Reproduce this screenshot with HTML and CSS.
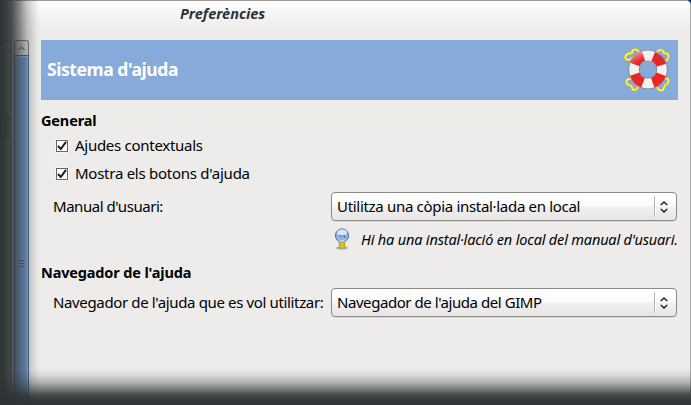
FILE: index.html
```html
<!DOCTYPE html>
<html lang="ca">
<head>
<meta charset="utf-8">
<title>Preferències</title>
<link rel="stylesheet" href="styles.css">
</head>
<body>
<div class="backdrop">
<div class="window">
  <header class="titlebar"><span class="title">Preferències</span></header>
  <div class="body">
    <aside class="tree-edge">
      <div class="tree"><div class="selected-row"></div></div>
      <div class="scrollbar">
        <div class="stepper"><svg width="9" height="6" viewBox="0 0 9 6"><path d="M1.5 5 4.5 1.8 7.5 5" fill="none" stroke="#8b8b8a" stroke-width="1.6"/></svg></div>
        <div class="thumb"><div class="grip"></div></div>
      </div>
    </aside>
    <main class="content">
      <div class="banner">
        <h1>Sistema d'ajuda</h1>
        <svg class="ring" width="50" height="50" viewBox="0 0 50 50">
          <defs>
            <linearGradient id="red" x1="0" y1="0" x2="1" y2="1"><stop offset="0" stop-color="#f88"/><stop offset=".22" stop-color="#e02a2a"/><stop offset="1" stop-color="#f02222"/></linearGradient>
          </defs>
          <g fill="none" stroke="#cdb62c" stroke-width="2.8" stroke-linejoin="round">
            <path d="M16 7C14 3 9 4 9 8 4 8 1 11 3 14 5 16 9 14 10 12M34 7C36 4 40 4 41 8 46 8 47 12 44 15 42 17 39 14 39 12M10 34C5 33 2 35 4 39 6 40 8 40 9 42 9 46 13 46 15 42M39 34C43 32 47 34 45 38 44 40 41 39 41 43 40 47 35 46 34 42"/>
          </g>
          <g fill="none" stroke="#fff56a" stroke-width="1.5" stroke-linejoin="round">
            <path d="M16 7C14 3 9 4 9 8 4 8 1 11 3 14 5 16 9 14 10 12M34 7C36 4 40 4 41 8 46 8 47 12 44 15 42 17 39 14 39 12M10 34C5 33 2 35 4 39 6 40 8 40 9 42 9 46 13 46 15 42M39 34C43 32 47 34 45 38 44 40 41 39 41 43 40 47 35 46 34 42"/>
          </g>
          <circle cx="25" cy="24.5" r="14" fill="none" stroke="#747b80" stroke-width="11.2"/>
          <circle cx="25" cy="24.5" r="14" fill="none" stroke="#f1f1ee" stroke-width="9.8"/>
          <circle cx="25" cy="24.5" r="14" fill="none" stroke="url(#red)" stroke-width="9.8" stroke-dasharray="12.2 9.791" transform="rotate(20 25 24.5)"/>
        </svg>
      </div>
      <section>
        <h2 class="h-general">General</h2>
        <label class="check c1"><span class="box"><svg width="12" height="12" viewBox="0 0 12 12"><path d="M2 6 4.8 9 10 1.8" fill="none" stroke="#1c1c1c" stroke-width="2"/></svg></span><span class="t1">Ajudes contextuals</span></label>
        <label class="check c2"><span class="box"><svg width="12" height="12" viewBox="0 0 12 12"><path d="M2 6 4.8 9 10 1.8" fill="none" stroke="#1c1c1c" stroke-width="2"/></svg></span><span class="t2">Mostra els botons d'ajuda</span></label>
        <div class="field">
          <span class="label t3">Manual d'usuari:</span>
          <div class="combo"><span class="value t4">Utilitza una còpia instal·lada en local</span><span class="arrows"><svg width="10" height="14" viewBox="0 0 10 14"><path d="M1.8 5 5 2 8.2 5M1.8 9 5 12 8.2 9" fill="none" stroke="#222" stroke-width="1.6"/></svg></span></div>
        </div>
        <div class="hint">
          <svg width="18" height="22" viewBox="0 0 18 22">
            <ellipse cx="9" cy="20" rx="6" ry="1.6" fill="#777" opacity=".55"/>
            <circle cx="9" cy="7.5" r="6.6" fill="#8fb4e0" stroke="#4e76ab"/>
            <ellipse cx="9" cy="4.8" rx="5" ry="3.2" fill="#d8e6f5"/>
            <path d="M6 7.5h2l1 1 1-1h1.5V10" fill="none" stroke="#53657c" stroke-width=".9"/>
            <path d="M4.5 10Q9 15 13.5 10L11 14H7Z" fill="#d3e5f7" opacity=".8"/>
            <path d="M6.3 14.5h5.4v4L10.5 20h-3l-1.2-1.5Z" fill="#f0cf1d" stroke="#a78b12" stroke-width=".8"/>
            <path d="M6.5 17h5" stroke="#af9318" stroke-width=".8"/>
          </svg>
          <span class="t5">Hi ha una instal·lació en local del manual d'usuari.</span>
        </div>
      </section>
      <section class="browser">
        <h2 class="h-browser">Navegador de l'ajuda</h2>
        <div class="field">
          <span class="label t6">Navegador de l'ajuda que es vol utilitzar:</span>
          <div class="combo"><span class="value t7">Navegador de l'ajuda del GIMP</span><span class="arrows"><svg width="10" height="14" viewBox="0 0 10 14"><path d="M1.8 5 5 2 8.2 5M1.8 9 5 12 8.2 9" fill="none" stroke="#222" stroke-width="1.6"/></svg></span></div>
        </div>
      </section>
    </main>
  </div>
</div>
</div>
</body>
</html>
```

FILE: styles.css
```css
* { box-sizing: border-box; }
html, body { margin: 0; height: 100%; overflow: hidden; }
body {
  font: 15px/20px "Noto Sans", "Open Sans", sans-serif; color: #000;
  font-variant-ligatures: none; font-feature-settings: "locl" 0;
}
h1, h2 { margin: 0; }
svg { display: block; flex: none; }

.backdrop { height: 405px; background: #17356b; position: relative; }
.backdrop::before,
.backdrop::after { content: ""; position: absolute; z-index: 2; pointer-events: none; }
.backdrop::before {
  left: 0; top: 0; bottom: 0; width: 41px;
  background: linear-gradient(90deg, #2e3436 0, rgba(46,52,54,.97) 5px, rgba(46,52,54,.86) 12px, rgba(46,52,54,.6) 19px, rgba(46,52,54,.27) 27px, rgba(46,52,54,.1) 34px, rgba(46,52,54,0) 40px);
}
.backdrop::after {
  left: 0; right: 0; bottom: 0; height: 36px;
  background: linear-gradient(rgba(46,52,54,0) 0, rgba(46,52,54,.1) 6px, rgba(46,52,54,.3) 13px, rgba(46,52,54,.6) 20px, rgba(46,52,54,.88) 26px, rgba(46,52,54,.97) 31px, #2e3436 36px);
}
.window {
  height: 405px; display: flex; flex-direction: column;
  background: #edeceb; border-top: 1px solid #9c9a9a; border-right: 1px solid #aaa;
  border-top-right-radius: 5px; overflow: hidden;
}
.titlebar {
  height: 39px; padding: 2px 0 0 180px;
  background: linear-gradient(#fff 0, #f8f8f8 8px, #edeceb 30px);
}
.title { font-weight: bold; font-style: italic; font-size: 14.5px; color: #2c3338; white-space: nowrap; }
.body { flex: 1; display: flex; min-height: 0; }
.tree-edge { width: 41px; display: flex; gap: 3px; flex: none; }
.tree { width: 11px; background: #fff; border: 1px solid #777; border-left: 0; }
.selected-row { margin-top: 73px; height: 24px; background: #bbb; }
.scrollbar { width: 15px; display: flex; flex-direction: column; }
.stepper { height: 15px; display: flex; align-items: center; justify-content: center; border: 1px solid #777; border-bottom: 0; border-radius: 3px 3px 0 0; background: #dfdddb; }
.thumb { flex: 1; border: 1px solid #45638d; background: linear-gradient(90deg, #83acdf, #739bd0); box-shadow: inset -1px 1px #9abce7; padding: 204px 0 0 4px; }
.grip { width: 5px; height: 7px; background: repeating-linear-gradient(#44638f 0 1px, transparent 1px 3px); }

.content { width: 637px; display: flex; flex-direction: column; }
.banner { height: 60px; display: flex; align-items: center; justify-content: space-between; padding: 0 5px 0 6px; background: #86aad9; }
.banner h1 { color: #fff; font-size: 17.5px; line-height: 24px; margin-top: -2px; white-space: nowrap; letter-spacing: -.43px; }
section { display: flex; flex-direction: column; }
h2 { font-size: 14.5px; line-height: 20px; white-space: nowrap; letter-spacing: -.15px; }
.h-general { margin-top: 10px; }
.check { display: flex; align-items: center; gap: 7px; height: 28px; padding-left: 15px; white-space: nowrap; }
.c1 { margin-top: 1px; }
.box { width: 12px; height: 12px; margin-top: 2px; border: 1px solid #666; background: #fff; display: flex; align-items: center; justify-content: center; box-shadow: 0 0 0 1px #f6f5f4; }
.field { display: flex; height: 30px; margin-top: 5px; }
.label { width: 290px; padding-left: 12px; line-height: 29px; white-space: nowrap; }
.combo {
  width: 346px; height: 29px; display: flex; align-items: center; padding-left: 5px;
  border: 1px solid #8c8a88; border-radius: 4px; box-shadow: 0 1px #dddbd9;
  background: linear-gradient(#fff 0, #fafafa 48%, #f1f0f0 54%, #e7e6e5 100%);
}
.value { flex: 1; white-space: nowrap; margin-top: -2px; }
.arrows { width: 22px; height: 21px; border-left: 1px solid #b5b3b1; display: flex; align-items: center; padding-left: 4px; box-shadow: inset 1px 0 #fff; }
.hint { display: flex; align-items: center; height: 24px; margin-top: 6px; padding-left: 292px; gap: 10px; font-style: italic; white-space: nowrap; font-size: 14.5px; }
.hint svg { margin-top: -2px; }
.hint span { margin-top: -2px; }
.browser .h-browser { margin-top: 10px; }
.browser .field { margin-top: 6px; }

.t1 { letter-spacing: -.28px; }
.t2 { letter-spacing: -.26px; }
.t3 { letter-spacing: -.45px; }
.t4 { letter-spacing: -.31px; }
.t5 { letter-spacing: -.17px; }
.t6 { letter-spacing: -.36px; }
.t7 { letter-spacing: -.44px; }
```
